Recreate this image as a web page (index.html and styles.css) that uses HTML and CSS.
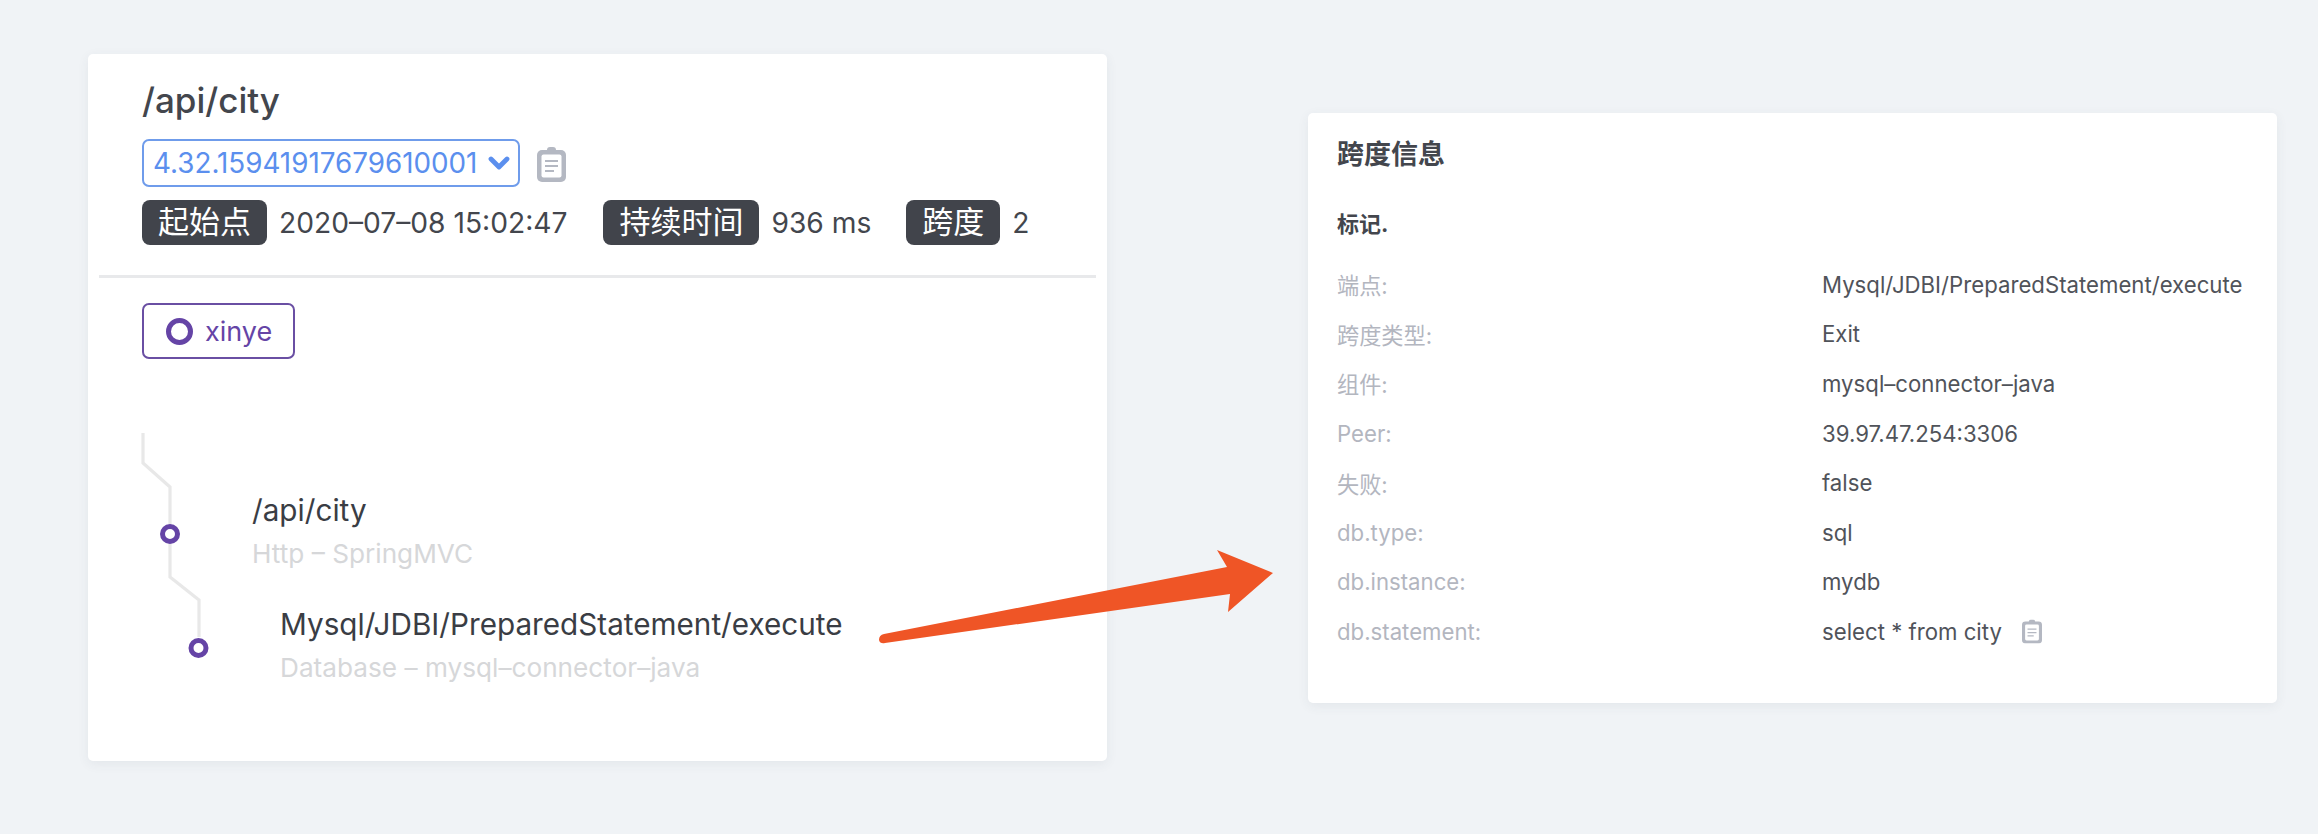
FILE: index.html
```html
<!DOCTYPE html>
<html lang="en">
<head>
    <meta charset="UTF-8">
    <meta name="viewport" content="width=device-width, initial-scale=1.0">
    <title>Trace detail</title>
    <link rel="stylesheet" href="styles.css">
</head>
<body>
    <div class="panels">
        <div class="card trace-card">
            <div class="trace-header">
                <h1 class="trace-title">/api/city</h1>
                <div class="trace-select-row">
                    <div class="trace-select">
                        <span>4.32.15941917679610001</span>
                        <svg class="chevron" viewBox="0 0 22 16"><path d="M3 4l8 8 8-8" fill="none" stroke="#5b8fee" stroke-width="4.8" stroke-linecap="round" stroke-linejoin="round"/></svg>
                    </div>
                    <svg class="clip clip-large" viewBox="0 0 29 35"><use href="#clip-icon"/></svg>
                </div>
                <div class="trace-meta">
                    <span class="badge">起始点</span>
                    <span class="meta-value meta-start">2020–07–08 15:02:47</span>
                    <span class="badge">持续时间</span>
                    <span class="meta-value meta-duration">936 ms</span>
                    <span class="badge">跨度</span>
                    <span class="meta-value">2</span>
                </div>
            </div>
            <div class="trace-body">
                <div class="service-tag"><i class="service-dot"></i>xinye</div>
                <div class="tree">
                    <svg class="tree-lines" viewBox="0 0 100 260">
                        <path d="M4 0V30L31 54V144L60 167V204" fill="none" stroke="#e8e8e8" stroke-width="3.2"/>
                        <circle cx="31" cy="101" r="7.500" fill="#fff" stroke="#6544a6" stroke-width="5"/>
                        <circle cx="59.500" cy="215" r="7.500" fill="#fff" stroke="#6544a6" stroke-width="5"/>
                    </svg>
                    <div class="span-row">
                        <div class="span-name">/api/city</div>
                        <div class="span-sub">Http – SpringMVC</div>
                    </div>
                    <div class="span-row span-child">
                        <div class="span-name">Mysql/JDBI/PreparedStatement/execute</div>
                        <div class="span-sub">Database – mysql–connector–java</div>
                    </div>
                </div>
            </div>
        </div>

        <div class="card info-card">
            <h2 class="info-title">跨度信息</h2>
            <h3 class="info-subtitle">标记.</h3>
            <div class="info-grid">
                <span class="info-label">端点:</span><span class="info-value">Mysql/JDBI/PreparedStatement/execute</span>
                <span class="info-label">跨度类型:</span><span class="info-value">Exit</span>
                <span class="info-label">组件:</span><span class="info-value">mysql–connector–java</span>
                <span class="info-label">Peer:</span><span class="info-value">39.97.47.254:3306</span>
                <span class="info-label">失败:</span><span class="info-value">false</span>
                <span class="info-label">db.type:</span><span class="info-value">sql</span>
                <span class="info-label">db.instance:</span><span class="info-value">mydb</span>
                <span class="info-label">db.statement:</span>
                <span class="info-value info-statement">select * from city<svg class="clip clip-small" viewBox="0 0 29 35"><use href="#clip-icon"/></svg></span>
            </div>
        </div>
    </div>

    <svg class="arrow" viewBox="0 0 400 100">
        <path d="M6 84Q1 85 1 90Q2 94 7 93L352 44L350 62L395 23L339 0L349 17Z" fill="#ef5526"/>
    </svg>

    <svg class="sprite" aria-hidden="true">
        <symbol id="clip-icon" viewBox="0 0 29 35">
            <rect x="10" y="0" width="9" height="6" rx="3" fill="#b4b8c2"/>
            <rect x="0" y="3" width="29" height="32" rx="5" fill="#b4b8c2"/>
            <rect x="4.500" y="7.500" width="20" height="23" rx="2" fill="#fff"/>
            <path d="M8 14H21M8 19H21M8 24H17" stroke="#b4b8c2" stroke-width="1.800" fill="none"/>
        </symbol>
    </svg>
</body>
</html>
```

FILE: styles.css
```css
* {
    margin: 0;
    padding: 0;
    box-sizing: border-box;
}

body {
    position: relative;
    height: 834px;
    overflow: hidden;
    background: #f0f3f6;
    font-family: Inter, 'Noto Sans CJK SC', sans-serif;
    color: #43464d;
}

.panels {
    display: flex;
    align-items: flex-start;
    gap: 201px;
    padding: 54px 0 0 88px;
}

.card {
    background: #fff;
    border-radius: 5px;
    box-shadow: 0 3px 12px rgba(60, 70, 90, 0.07);
}

.trace-card {
    width: 1019px;
    height: 707px;
    padding: 0 11px;
}

.trace-header {
    height: 224px;
    padding: 22px 0 0 43px;
    border-bottom: 3px solid #e8e9eb;
}

.trace-title {
    font-size: 35px;
    line-height: 48px;
    font-weight: 500;
    color: #43464d;
}

.trace-select-row {
    display: flex;
    align-items: center;
    gap: 17px;
    margin-top: 15px;
}

.trace-select {
    display: flex;
    align-items: center;
    justify-content: space-between;
    width: 378px;
    height: 48px;
    padding: 0 8px 0 9px;
    border: 2.5px solid #6f9ceb;
    border-radius: 7px;
    font-size: 27.8px;
    color: #5b8fee;
}

.chevron {
    width: 22px;
    height: 16px;
}

.clip {
    display: block;
    flex-shrink: 0;
}

.clip-large {
    width: 29px;
    height: 35px;
    margin-top: 3px;
}

.clip-small {
    width: 20px;
    height: 25px;
    margin-left: 20px;
}

.trace-meta {
    display: flex;
    align-items: center;
    margin-top: 13px;
}

.badge {
    height: 45px;
    padding: 0 16px;
    border-radius: 8px;
    background: #41444b;
    color: #fff;
    font-size: 31px;
    line-height: 44px;
}

.meta-value {
    margin-left: 12px;
    font-size: 28.2px;
    color: #43464d;
}

.meta-start {
    margin-right: 36px;
}

.meta-duration {
    margin-right: 35px;
}

.trace-body {
    padding: 25px 0 0 43px;
}

.service-tag {
    display: flex;
    align-items: center;
    width: 153px;
    height: 56px;
    padding-left: 22px;
    border: 2px solid #6a4fa3;
    border-radius: 7px;
    font-size: 27px;
    color: #6544a6;
}

.service-dot {
    width: 27px;
    height: 27px;
    margin-right: 12px;
    border: 5px solid #6544a6;
    border-radius: 50%;
}

.tree {
    position: relative;
    height: 370px;
    padding: 129px 0 0 110px;
}

.tree-lines {
    position: absolute;
    left: -3px;
    top: 74px;
    width: 100px;
    height: 260px;
}

.span-row {
    height: 114px;
}

.span-child {
    margin-left: 28px;
}

.span-name {
    font-size: 29.7px;
    line-height: 44px;
    color: #3a3d44;
}

.span-sub {
    font-size: 26.2px;
    line-height: 44px;
    color: #d6d7d9;
}

.info-card {
    width: 969px;
    height: 590px;
    margin-top: 59px;
    padding: 26px 29px;
}

.info-title {
    font-size: 27px;
    line-height: 32px;
    font-weight: 700;
    color: #43464d;
}

.info-subtitle {
    margin-top: 37.5px;
    font-size: 22px;
    line-height: 30px;
    font-weight: 700;
    color: #43464d;
}

.info-grid {
    display: grid;
    grid-template-columns: 485px 1fr;
    grid-auto-rows: 49.6px;
    align-items: center;
    margin-top: 21px;
    font-size: 22.2px;
}

.info-label {
    color: #b3b6bf;
}

.info-value {
    color: #50535a;
}

.info-statement {
    display: flex;
    align-items: center;
}

.arrow {
    position: absolute;
    left: 878px;
    top: 550px;
    width: 400px;
    height: 100px;
}

.sprite {
    display: none;
}
```
